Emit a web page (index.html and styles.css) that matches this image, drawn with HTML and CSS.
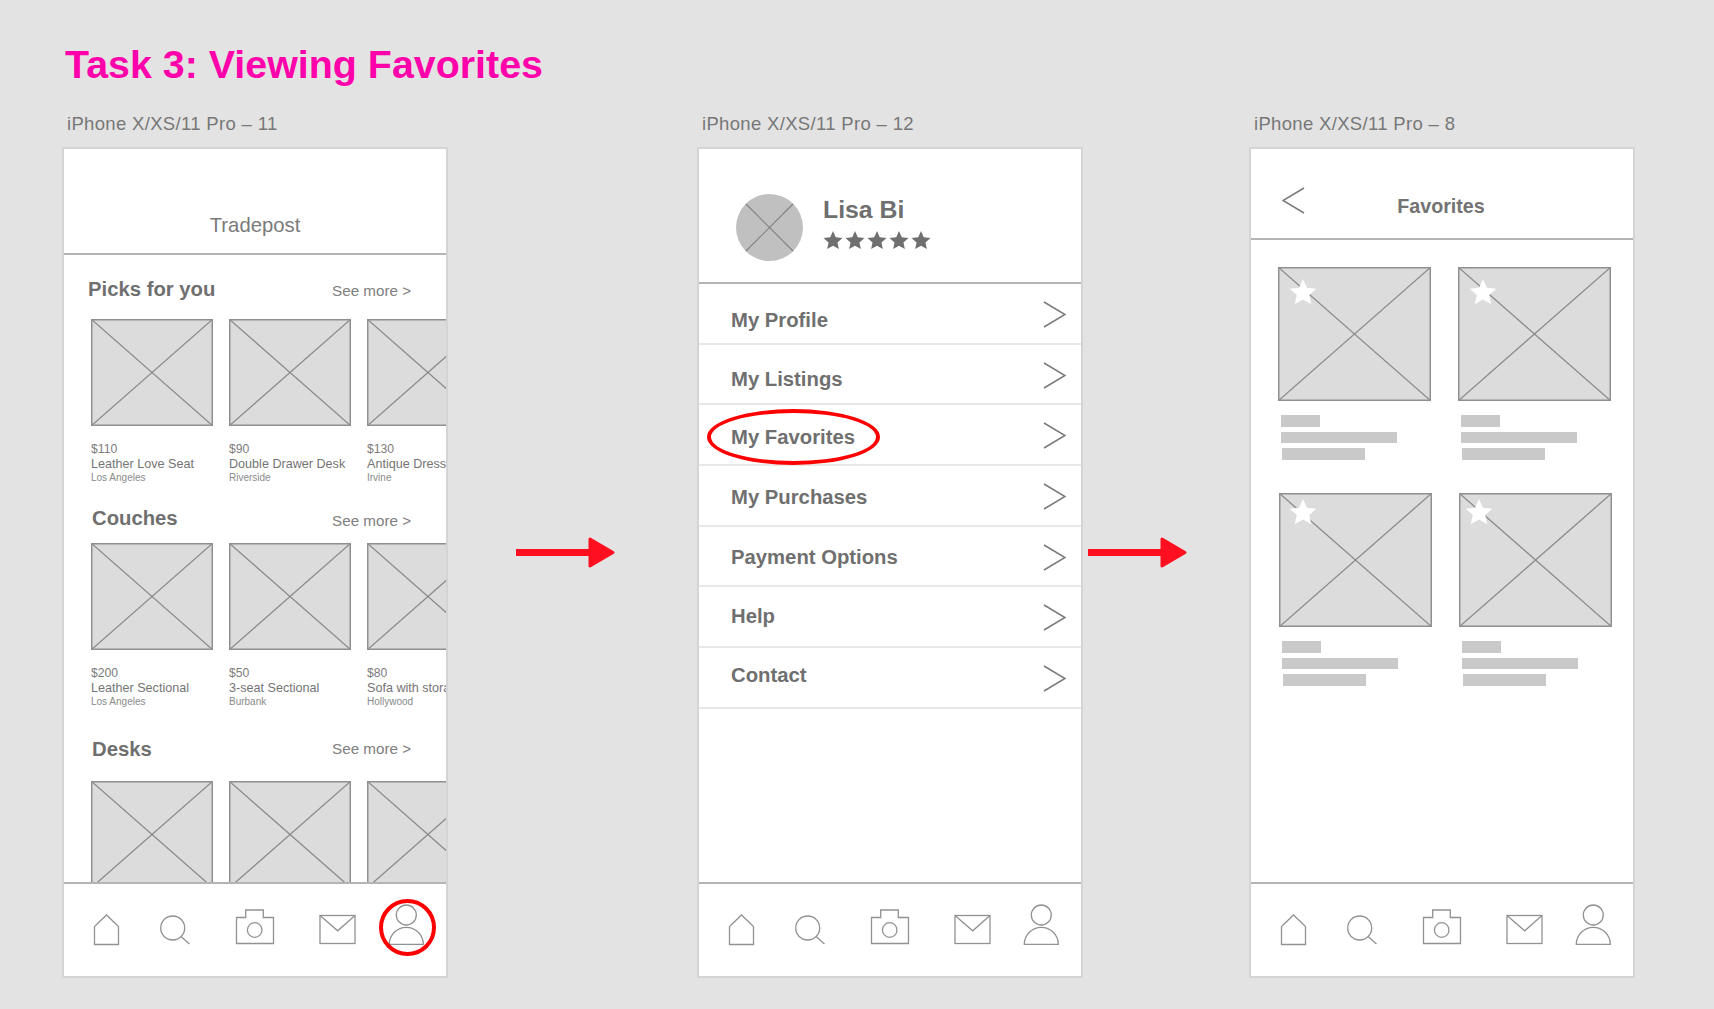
FILE: index.html
```html
<!DOCTYPE html>
<html>
<head>
<meta charset="utf-8">
<title>Task 3: Viewing Favorites</title>
<link rel="stylesheet" href="styles.css">
</head>
<body>

<!-- shared drawings -->
<svg class="defs" width="0" height="0">
  <symbol id="ph" viewBox="0 0 100 100" preserveAspectRatio="none">
    <rect width="100" height="100" fill="#dcdcdc"/>
    <line x1="0" y1="0" x2="100" y2="100" stroke="#8a8a8a" stroke-width="1.3" vector-effect="non-scaling-stroke"/>
    <line x1="100" y1="0" x2="0" y2="100" stroke="#8a8a8a" stroke-width="1.3" vector-effect="non-scaling-stroke"/>
    <rect width="100" height="100" fill="none" stroke="#8f8f8f" stroke-width="3" vector-effect="non-scaling-stroke"/>
  </symbol>
  <symbol id="star" viewBox="-1 -1 2 2">
    <polygon points="0,-1 .276,-.38 .951,-.309 .447,.145 .588,.809 0,.47 -.588,.809 -.447,.145 -.951,-.309 -.276,-.38"/>
  </symbol>
  <symbol id="chev" viewBox="0 0 23 27">
    <polyline points="1,1 22,13.5 1,26" fill="none" stroke="#7a7a7a" stroke-width="1.5"/>
  </symbol>
  <symbol id="tabs" viewBox="0 0 382 92">
    <g fill="none" stroke="#929292" stroke-width="1.3">
      <path d="M30.5 60.5V42.5L42.5 31L54.5 42.5V60.5Z"/>
      <circle cx="108.7" cy="44" r="12"/>
      <line x1="117" y1="52.5" x2="125.5" y2="60"/>
      <path d="M172.5 59.5V33.5H181.7V26H199.3V33.5H209.5V59.5Z"/>
      <circle cx="190.7" cy="46" r="7.3"/>
      <rect x="256" y="31.5" width="35" height="28"/>
      <polyline points="256,31.5 273.7,46.8 291,31.5"/>
      <circle cx="342.3" cy="31" r="10"/>
      <path d="M325.3 60.3A17 17 0 0 1 359.3 60.3Z"/>
    </g>
  </symbol>
  <symbol id="arrow" viewBox="0 0 100 33">
    <rect x="0" y="13" width="76" height="7" fill="#ff0f1f"/>
    <polygon points="74,3 97,16.5 74,30" fill="#ff0f1f" stroke="#ff0f1f" stroke-width="3" stroke-linejoin="round"/>
  </symbol>
</svg>

<h1 class="title">Task 3: Viewing Favorites</h1>

<div class="flow">

  <div class="board">
    <div class="board-label">iPhone X/XS/11 Pro – 11</div>
    <div class="phone">
      <div class="top-bar">Tradepost</div>
      <div class="feed">

        <div class="section picks">
          <div class="section-head">
            <div class="section-title">Picks for you</div>
            <div class="see-more">See more &gt;</div>
          </div>
          <div class="cards">
            <div class="card">
              <svg class="thumb"><use href="#ph"/></svg>
              <div class="price">$110</div>
              <div class="name">Leather Love Seat</div>
              <div class="city">Los Angeles</div>
            </div>
            <div class="card">
              <svg class="thumb"><use href="#ph"/></svg>
              <div class="price">$90</div>
              <div class="name">Double Drawer Desk</div>
              <div class="city">Riverside</div>
            </div>
            <div class="card">
              <svg class="thumb"><use href="#ph"/></svg>
              <div class="price">$130</div>
              <div class="name">Antique Dresser</div>
              <div class="city">Irvine</div>
            </div>
          </div>
        </div>

        <div class="section couches">
          <div class="section-head">
            <div class="section-title">Couches</div>
            <div class="see-more">See more &gt;</div>
          </div>
          <div class="cards">
            <div class="card">
              <svg class="thumb"><use href="#ph"/></svg>
              <div class="price">$200</div>
              <div class="name">Leather Sectional</div>
              <div class="city">Los Angeles</div>
            </div>
            <div class="card">
              <svg class="thumb"><use href="#ph"/></svg>
              <div class="price">$50</div>
              <div class="name">3-seat Sectional</div>
              <div class="city">Burbank</div>
            </div>
            <div class="card">
              <svg class="thumb"><use href="#ph"/></svg>
              <div class="price">$80</div>
              <div class="name">Sofa with storage</div>
              <div class="city">Hollywood</div>
            </div>
          </div>
        </div>

        <div class="section desks">
          <div class="section-head">
            <div class="section-title">Desks</div>
            <div class="see-more">See more &gt;</div>
          </div>
          <div class="cards">
            <div class="card"><svg class="thumb"><use href="#ph"/></svg></div>
            <div class="card"><svg class="thumb"><use href="#ph"/></svg></div>
            <div class="card"><svg class="thumb"><use href="#ph"/></svg></div>
          </div>
        </div>

      </div>
      <div class="tabbar">
        <svg class="tabs"><use href="#tabs"/></svg>
        <div class="ring"></div>
      </div>
    </div>
  </div>

  <svg class="flow-arrow first"><use href="#arrow"/></svg>

  <div class="board">
    <div class="board-label">iPhone X/XS/11 Pro – 12</div>
    <div class="phone">
      <div class="profile">
        <svg class="avatar" viewBox="0 0 67 67">
          <circle cx="33.5" cy="33.5" r="33.5" fill="#c0c0c0"/>
          <line x1="10" y1="10" x2="57" y2="57" stroke="#808080" stroke-width="1.1"/>
          <line x1="57" y1="10" x2="10" y2="57" stroke="#808080" stroke-width="1.1"/>
        </svg>
        <div class="profile-info">
          <div class="profile-name">Lisa Bi</div>
          <div class="stars">
            <svg class="star"><use href="#star"/></svg>
            <svg class="star"><use href="#star"/></svg>
            <svg class="star"><use href="#star"/></svg>
            <svg class="star"><use href="#star"/></svg>
            <svg class="star"><use href="#star"/></svg>
          </div>
        </div>
      </div>
      <div class="menu">
        <div class="menu-row"><span class="menu-label">My Profile</span><svg class="chev"><use href="#chev"/></svg></div>
        <div class="menu-row"><span class="menu-label">My Listings</span><svg class="chev"><use href="#chev"/></svg></div>
        <div class="menu-row"><span class="menu-label">My Favorites</span><svg class="chev"><use href="#chev"/></svg><div class="oval"></div></div>
        <div class="menu-row"><span class="menu-label">My Purchases</span><svg class="chev"><use href="#chev"/></svg></div>
        <div class="menu-row"><span class="menu-label">Payment Options</span><svg class="chev"><use href="#chev"/></svg></div>
        <div class="menu-row"><span class="menu-label">Help</span><svg class="chev"><use href="#chev"/></svg></div>
        <div class="menu-row"><span class="menu-label">Contact</span><svg class="chev"><use href="#chev"/></svg></div>
      </div>
      <div class="tabbar"><svg class="tabs"><use href="#tabs"/></svg></div>
    </div>
  </div>

  <svg class="flow-arrow second"><use href="#arrow"/></svg>

  <div class="board">
    <div class="board-label">iPhone X/XS/11 Pro – 8</div>
    <div class="phone">
      <div class="fav-bar">
        <svg class="back" viewBox="0 0 23 27"><polyline points="22,1 1,13.5 22,26" fill="none" stroke="#7a7a7a" stroke-width="1.5"/></svg>
        <div class="fav-title">Favorites</div>
      </div>
      <div class="fav-list">
        <div class="fav-row">
          <div class="fav">
            <svg class="fav-thumb"><use href="#ph"/></svg>
            <svg class="fav-star"><use href="#star"/></svg>
            <div class="bar bar-a"></div>
            <div class="bar bar-b"></div>
            <div class="bar bar-c"></div>
          </div>
          <div class="fav">
            <svg class="fav-thumb"><use href="#ph"/></svg>
            <svg class="fav-star"><use href="#star"/></svg>
            <div class="bar bar-a"></div>
            <div class="bar bar-b"></div>
            <div class="bar bar-c"></div>
          </div>
        </div>
        <div class="fav-row lower">
          <div class="fav">
            <svg class="fav-thumb"><use href="#ph"/></svg>
            <svg class="fav-star"><use href="#star"/></svg>
            <div class="bar bar-a"></div>
            <div class="bar bar-b"></div>
            <div class="bar bar-c"></div>
          </div>
          <div class="fav">
            <svg class="fav-thumb"><use href="#ph"/></svg>
            <svg class="fav-star"><use href="#star"/></svg>
            <div class="bar bar-a"></div>
            <div class="bar bar-b"></div>
            <div class="bar bar-c"></div>
          </div>
        </div>
      </div>
      <div class="tabbar"><svg class="tabs"><use href="#tabs"/></svg></div>
    </div>
  </div>

</div>
</body>
</html>
```

FILE: styles.css
```css
html, body {
  margin: 0;
  height: 1009px;
  overflow: hidden;
}

body {
  background: #e3e3e3;
  font-family: "Liberation Sans", Arial, sans-serif;
  padding: 42px 0 0 62px;
  box-sizing: border-box;
}

.defs {
  position: absolute;
}

.title {
  margin: 0 0 27px 3px;
  font-size: 39.4px;
  line-height: 44px;
  font-weight: bold;
  color: #ff00aa;
}

.flow {
  display: flex;
  align-items: flex-start;
}

.board-label {
  margin: 0 0 12px 5px;
  font-size: 18.5px;
  line-height: 22px;
  letter-spacing: 0.33px;
  color: #777;
}

.phone {
  width: 382px;
  height: 827px;
  border: 2px solid #d4d4d4;
  background: #fff;
  display: flex;
  flex-direction: column;
}

.flow-arrow {
  width: 100px;
  height: 33px;
  margin-top: 423px;
  flex: none;
}

.flow-arrow.first {
  margin-left: 68px;
  margin-right: 81px;
}

.flow-arrow.second {
  margin-left: 5px;
  margin-right: 61px;
}

/* tradepost feed */
.top-bar {
  height: 73px;
  padding: 15px 0 16px;
  display: flex;
  align-items: flex-end;
  justify-content: center;
  border-bottom: 2px solid #b4b4b4;
  font-size: 20.3px;
  line-height: 24px;
  color: #7a7a7a;
}

.feed {
  flex: 1;
  min-height: 0;
  overflow: hidden;
  padding: 22px 0 0 27px;
}

.section-head {
  display: flex;
  justify-content: space-between;
  align-items: flex-start;
  width: 320px;
}

.section-title {
  font-size: 20.3px;
  line-height: 24px;
  font-weight: bold;
  color: #6f6f6f;
  margin-left: 1px;
}

.see-more {
  font-size: 15.2px;
  line-height: 24px;
  color: #808080;
  padding-top: 3px;
}

.picks .section-title {
  margin-left: -3px;
}

.picks .see-more {
  padding-top: 2px;
}

.picks .section-head {
  margin-bottom: 16px;
}

.couches {
  margin-top: 22px;
}

.couches .section-head {
  margin-bottom: 10px;
}

.desks {
  margin-top: 29px;
}

.desks .section-head {
  margin-bottom: 20px;
}

.desks .see-more {
  padding-top: 0;
}

.cards {
  display: flex;
  gap: 16px;
}

.card {
  width: 122px;
  flex: none;
  white-space: nowrap;
}

.thumb {
  display: block;
  width: 122px;
  height: 107px;
  margin-bottom: 15px;
}

.price {
  font-size: 12.2px;
  line-height: 16px;
  color: #7c7c7c;
}

.name {
  font-size: 12.6px;
  line-height: 14px;
  color: #747474;
}

.city {
  font-size: 10px;
  line-height: 13px;
  color: #8a8a8a;
}

/* tab bar */
.tabbar {
  position: relative;
  height: 92px;
  flex: none;
  background: #fff;
  border-top: 2px solid #b4b4b4;
}

.tabs {
  display: block;
  width: 382px;
  height: 92px;
}

.ring {
  position: absolute;
  left: 315px;
  top: 15px;
  width: 49px;
  height: 49px;
  border: 4px solid #f00;
  border-radius: 50%;
}

/* profile menu */
.profile {
  height: 88px;
  padding: 45px 0 0 37px;
  display: flex;
  gap: 20px;
  border-bottom: 2px solid #b4b4b4;
}

.avatar {
  width: 67px;
  height: 67px;
  flex: none;
}

.profile-name {
  margin-top: 2px;
  font-size: 24.8px;
  line-height: 28px;
  font-weight: bold;
  color: #6f6f6f;
}

.stars {
  display: flex;
  gap: 2px;
  margin: 7px 0 0 0;
}

.star {
  width: 20px;
  height: 20px;
  fill: #6f6f6f;
}

.menu {
  flex: 1;
}

.menu-row {
  position: relative;
  height: 58.7px;
  padding: 0 15px 0 32px;
  display: flex;
  justify-content: space-between;
  align-items: flex-start;
  border-bottom: 2px solid #e8e8e8;
}

.menu-label {
  font-size: 20.3px;
  line-height: 24px;
  font-weight: bold;
  color: #6f6f6f;
}

.menu-row:nth-child(1) .menu-label { margin-top: 24px; }
.menu-row:nth-child(2) .menu-label { margin-top: 22px; }
.menu-row:nth-child(3) .menu-label { margin-top: 20px; }
.menu-row:nth-child(4) .menu-label { margin-top: 19px; }
.menu-row:nth-child(5) .menu-label { margin-top: 18px; }
.menu-row:nth-child(6) .menu-label { margin-top: 17px; }
.menu-row:nth-child(7) .menu-label { margin-top: 15px; }

.chev {
  width: 23px;
  height: 27px;
  margin-top: 17px;
  flex: none;
}

.oval {
  position: absolute;
  left: 8px;
  top: 4px;
  width: 165px;
  height: 48px;
  border: 4px solid #f00;
  border-radius: 50%;
}

/* favorites */
.fav-bar {
  height: 51px;
  padding-top: 38px;
  display: grid;
  grid-template-columns: 1fr auto 1fr;
  align-items: start;
  border-bottom: 2px solid #b4b4b4;
}

.back {
  width: 23px;
  height: 27px;
  margin-left: 31px;
}

.fav-title {
  margin: 7px 0 0 -2px;
  font-size: 19.7px;
  line-height: 24px;
  font-weight: bold;
  color: #737373;
}

.fav-list {
  flex: 1;
  padding: 27px 0 0 27px;
}

.fav-row {
  display: flex;
  gap: 27px;
}

.fav-row.lower {
  margin: 33px 0 0 1px;
}

.fav {
  position: relative;
  width: 153px;
}

.fav-thumb {
  display: block;
  width: 153px;
  height: 134px;
  margin-bottom: 14px;
}

.fav-star {
  position: absolute;
  left: 11px;
  top: 12px;
  width: 28px;
  height: 28px;
  fill: #fff;
}

.lower .fav-star {
  left: 10px;
  top: 6px;
}

.lower .fav + .fav .fav-star {
  left: 6px;
}

.bar {
  background: #c9c9c9;
  margin-left: 3px;
}

.bar-a {
  width: 39px;
  height: 12px;
}

.bar-b {
  width: 116px;
  height: 11px;
  margin-top: 5px;
}

.bar-c {
  width: 83px;
  height: 12px;
  margin: 5px 0 0 4px;
}
```
